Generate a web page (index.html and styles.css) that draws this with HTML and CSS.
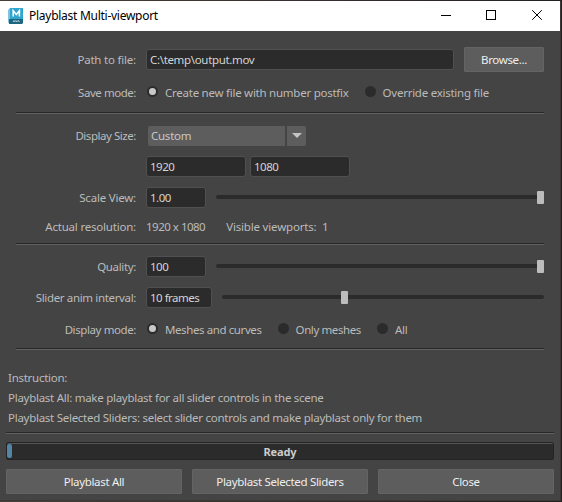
FILE: index.html
```html
<!DOCTYPE html>
<html lang="en">
<head>
<meta charset="utf-8">
<title>Playblast Multi-viewport</title>
<link rel="stylesheet" href="styles.css">
</head>
<body>
<div class="window">
  <header class="titlebar">
    <svg class="app-icon" width="16" height="16" viewBox="0 0 16 16">
      <path fill="#7fc4dc" d="M0 2L2 0V14L0 15Z"/>
      <path fill="#2fa5cf" d="M2 0H15V11H2Z"/>
      <path fill="#1d6681" d="M1 11H15V15L14 16H1Z"/>
      <path fill="none" stroke="#fff" stroke-width="1.6" d="M5.2 8.5V2.8L8.3 6.6L11.4 2.8V8.5"/>
      <path fill="none" stroke="#b9d4de" stroke-width=".9" d="M5 14L6 12.4L7 14M7.5 12.4L8.3 14L9 12.4M9.6 14L10.5 12.4L11.4 14"/>
    </svg>
    <h1 class="title">Playblast Multi-viewport</h1>
    <svg class="controls" width="102" height="10" viewBox="0 0 102 10" fill="none" stroke="#000" stroke-width="1" shape-rendering="crispEdges">
      <path d="M0 5.5H10M45.5 .5H54.5V9.5H45.5Z"/>
      <path shape-rendering="auto" d="M91.2 .2L100.8 9.8M100.8 .2L91.2 9.8"/>
    </svg>
  </header>

  <main class="form">
    <div class="row path"><span class="label l-path">Path to file:</span><span class="input grow t-path">C:\temp\output.mov</span><button class="button browse">Browse...</button></div>
    <div class="row save"><span class="label l-save">Save mode:</span><i class="radio on"></i><span class="option t-create">Create new file with number postfix</span><i class="radio"></i><span class="option t-over">Override existing file</span></div>
    <hr class="sep s1">
    <div class="row size"><span class="label l-size">Display Size:</span><div class="combo"><span class="combo-text">Custom</span><span class="combo-arrow"></span></div></div>
    <div class="row dims"><span class="label"></span><span class="input dim">1920</span><span class="input dim">1080</span></div>
    <div class="row scale"><span class="label l-scale">Scale View:</span><span class="input num">1.00</span><div class="slider"><i class="handle"></i></div></div>
    <div class="row actual"><span class="label l-actual">Actual resolution:</span><span class="t-res">1920 x 1080</span><span class="t-vis">Visible viewports:&nbsp; 1</span></div>
    <hr class="sep s2">
    <div class="row quality"><span class="label l-quality">Quality:</span><span class="input num">100</span><div class="slider"><i class="handle"></i></div></div>
    <div class="row interval"><span class="label l-interval">Slider anim interval:</span><span class="input frames">10 frames</span><div class="slider"><i class="handle mid"></i></div></div>
    <div class="row mode"><span class="label l-mode">Display mode:</span><i class="radio on"></i><span class="option t-mesh">Meshes and curves</span><i class="radio"></i><span class="option t-only">Only meshes</span><i class="radio"></i><span class="option">All</span></div>
    <hr class="sep s3">
  </main>

  <section class="help">
    <p>Instruction:</p>
    <p>Playblast All: make playblast for all slider controls in the scene</p>
    <p>Playblast Selected Sliders: select slider controls and make playblast only for them</p>
  </section>

  <footer class="bottom">
    <hr class="sep">
    <div class="progress"><i class="chunk"></i><b>Ready</b></div>
    <div class="buttons"><button class="button">Playblast All</button><button class="button">Playblast Selected Sliders</button><button class="button">Close</button></div>
  </footer>
</div>
</body>
</html>
```
FILE: styles.css
```css
* { box-sizing: border-box; }
body {
  margin: 0;
  width: 562px;
  height: 502px;
  overflow: hidden;
  padding-top: 1px;
  background: linear-gradient(90deg, #4b4038, #37302e 50%, #24211f);
  font: 11.5px/20px "Noto Sans", "Open Sans", sans-serif;
  letter-spacing: -.25px;
  color: #bbb;
}
.window {
  width: 561px;
  height: 500px;
  background: #444;
  border-right: 1px solid #393939;
  border-bottom: 1px solid #393939;
}
.titlebar {
  display: flex;
  align-items: center;
  height: 30px;
  padding: 0 17px 0 8px;
  background: #fff;
  color: #000;
}
.app-icon { margin-right: 5px; margin-top: -1px; }
.title { flex: 1; margin: 0; font-size: 12px; font-weight: 400; letter-spacing: -.27px; white-space: nowrap; }
.controls { flex: none; margin-top: -2px; }

.form { padding: 0 16px; }
.row { display: flex; align-items: center; height: 21px; white-space: nowrap; }
.label { flex: none; width: 120px; margin-right: 10px; text-align: right; letter-spacing: -.35px; }
.l-path { letter-spacing: -.2px; }
.l-save { letter-spacing: -.45px; }
.l-size { letter-spacing: -.45px; }
.l-mode { letter-spacing: -.4px; }
.l-actual, .l-scale { letter-spacing: -.2px; }
.input {
  height: 21px;
  padding: 0 3px;
  border: 1px solid #505050;
  border-radius: 3px;
  background: #2b2b2b;
  color: #d4d4d4;
  line-height: 20px;
  letter-spacing: -.5px;
}
.grow { flex: 1; letter-spacing: -.33px; }
.button {
  height: 25px;
  padding: 0;
  border: 1px solid #646464;
  border-radius: 1px;
  background: #5d5d5d;
  color: #eee;
  font: inherit;
  line-height: 23px;
  letter-spacing: -.33px;
}
.browse { width: 80px; margin-left: 10px; }
.radio {
  flex: none;
  width: 11px;
  height: 11px;
  margin: -3px 0 0 1px;
  border-radius: 50%;
  background: #2b2b2b;
}
.radio.on { border: 2px solid #2b2b2b; background: #c8c8c8; }
.option { margin: 0 15px 0 7px; }
.t-mesh { letter-spacing: -.4px; }
.t-only { letter-spacing: -.4px; }
.sep { height: 2px; margin: 0; border: 0; border-top: 1px solid #272727; background: #626262; }

.path { height: 25px; margin-top: 16px; }
.save { margin-top: 10px; }
.s1 { margin-top: 9px; }
.size { margin-top: 11px; }
.dims { margin-top: 10px; }
.scale { margin-top: 10px; }
.actual { margin-top: 8px; }
.s2 { margin-top: 6px; }
.quality { margin-top: 11px; }
.interval { margin-top: 10px; }
.mode { margin-top: 11px; }
.s3 { margin-top: 8px; }

.combo { display: flex; width: 158px; height: 20px; margin-left: 2px; gap: 2px; }
.combo-text { flex: 1; padding-left: 3px; border-radius: 2px 0 0 2px; background: #5d5d5d; color: #c8c8c8; line-height: 20px; }
.combo-arrow { display: flex; align-items: center; justify-content: center; width: 19px; background: #5d5d5d; border-radius: 0 2px 2px 0; }
.combo-arrow::before { content: ""; border: 5px solid transparent; border-top-color: #c4c4c4; border-bottom: 0; }
.dim { width: 100px; margin-right: 4px; }
.num { width: 60px; }
.frames { width: 66px; }
.slider { display: flex; align-items: center; justify-content: flex-end; flex: 1; height: 4px; margin: -1px 0 0 10px; border-radius: 2px; background: #2b2b2b; }
.handle { flex: none; width: 7px; height: 13px; margin-top: 1px; border-radius: 1px; background: #bcbcbc; }
.handle.mid { margin-right: 196px; }
.t-res { letter-spacing: -.5px; }
.t-vis { margin-left: 21px; letter-spacing: -.18px; }

.help { padding: 18px 8px 0; letter-spacing: -.27px; white-space: nowrap; }
.help p { margin: 0; height: 20px; line-height: 19px; }
.bottom { padding: 4px 6px 0; }
.progress {
  display: flex;
  align-items: center;
  height: 18px;
  margin-top: 8px;
  border: 1px solid #242424;
  border-radius: 2px;
  background: #2b2b2b;
  box-shadow: inset 0 1px #555;
}
.progress b { flex: 1; padding-right: 5px; text-align: center; font-size: 11px; font-weight: 700; letter-spacing: -.1px; line-height: 21px; color: #ccc; }
.chunk { width: 5px; height: 14px; border-radius: 2px; background: #5285a6; }
.buttons { display: grid; grid-template-columns: repeat(3, 1fr); gap: 10px; margin-top: 9px; }
```
